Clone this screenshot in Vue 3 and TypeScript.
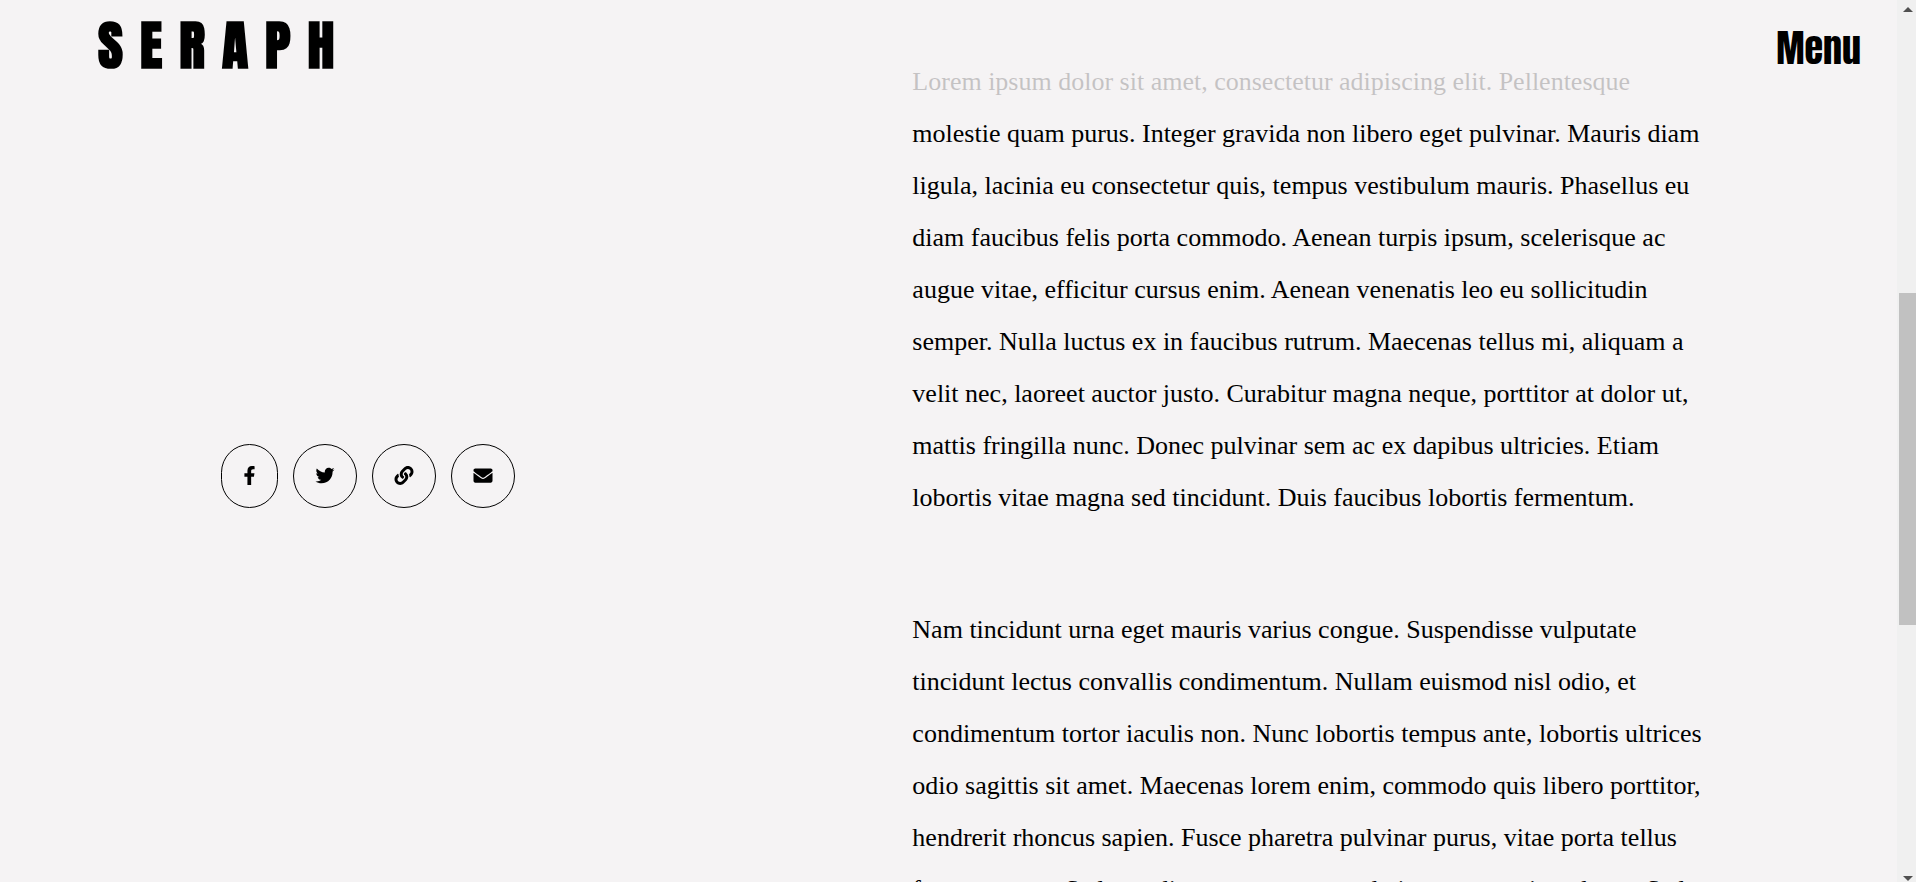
<script setup lang="ts">
interface ShareLink {
  label: string
  viewBox: string
  width: number
  path: string
}

const shareLinks: ShareLink[] = [
  {
    label: 'Share on Facebook',
    viewBox: '0 0 320 512',
    width: 13,
    path: 'M279.14 288l14.22-92.66h-88.91v-60.13c0-25.35 12.42-50.06 52.24-50.06h40.42V6.26S260.43 0 225.36 0c-73.22 0-121.08 44.38-121.08 124.72v70.62H22.89V288h81.39v224h100.17V288z',
  },
  {
    label: 'Share on Twitter',
    viewBox: '0 0 512 512',
    width: 20,
    path: 'M459.37 151.716c.325 4.548.325 9.097.325 13.645 0 138.72-105.583 298.558-298.558 298.558-59.452 0-114.68-17.219-161.137-47.106 8.447.974 16.568 1.299 25.34 1.299 49.055 0 94.213-16.568 130.274-44.832-46.132-.975-84.792-31.188-98.112-72.772 6.498.974 12.995 1.624 19.818 1.624 9.421 0 18.843-1.3 27.614-3.573-48.081-9.747-84.143-51.98-84.143-102.985v-1.299c13.969 7.797 30.214 12.67 47.431 13.319-28.264-18.843-46.781-51.005-46.781-87.391 0-19.492 5.197-37.36 14.294-52.954 51.655 63.675 129.3 105.258 216.365 109.807-1.624-7.797-2.599-15.918-2.599-24.04 0-57.828 46.782-104.934 104.934-104.934 30.213 0 57.502 12.67 76.67 33.137 23.715-4.548 46.456-13.32 66.599-25.34-7.798 24.366-24.366 44.833-46.132 57.827 21.117-2.273 41.584-8.122 60.426-16.243-14.292 20.791-32.161 39.308-52.628 54.253z',
  },
  {
    label: 'Copy link',
    viewBox: '0 0 512 512',
    width: 20,
    path: 'M326.612 185.391c59.747 59.809 58.927 155.698.36 214.59-.11.12-.24.25-.36.37l-67.2 67.2c-59.27 59.27-155.699 59.262-214.96 0-59.27-59.26-59.27-155.7 0-214.96l37.106-37.106c9.84-9.84 26.786-3.3 27.294 10.606.648 17.722 3.826 35.527 9.69 52.721 1.986 5.822.567 12.262-3.783 16.612l-13.087 13.087c-28.026 28.026-28.905 73.66-1.155 101.96 28.024 28.579 74.086 28.749 102.325.51l67.2-67.19c28.191-28.191 28.073-73.757 0-101.83-3.701-3.694-7.429-6.564-10.341-8.569a16.037 16.037 0 0 1-6.947-12.606c-.396-10.567 3.348-21.456 11.698-29.806l21.054-21.055c5.521-5.521 14.182-6.199 20.584-1.731a152.482 152.482 0 0 1 20.522 17.197zM467.547 44.449c-59.261-59.262-155.69-59.27-214.96 0l-67.2 67.2c-.12.12-.25.25-.36.37-58.566 58.892-59.387 154.781.36 214.59a152.454 152.454 0 0 0 20.521 17.196c6.402 4.468 15.064 3.789 20.584-1.731l21.054-21.055c8.35-8.35 12.094-19.239 11.698-29.806a16.037 16.037 0 0 0-6.947-12.606c-2.912-2.005-6.64-4.875-10.341-8.569-28.073-28.073-28.191-73.639 0-101.83l67.2-67.19c28.239-28.239 74.3-28.069 102.325.51 27.75 28.3 26.872 73.934-1.155 101.96l-13.087 13.087c-4.35 4.35-5.769 10.79-3.783 16.612 5.864 17.194 9.042 34.999 9.69 52.721.509 13.906 17.454 20.446 27.294 10.606l37.106-37.106c59.271-59.259 59.271-155.699.001-214.959z',
  },
  {
    label: 'Share by email',
    viewBox: '0 0 512 512',
    width: 20,
    path: 'M502.3 190.8c3.9-3.1 9.7-.2 9.7 4.7V400c0 26.5-21.5 48-48 48H48c-26.5 0-48-21.5-48-48V195.6c0-5 5.7-7.8 9.7-4.7 22.4 17.4 52.1 39.5 154.1 113.6 21.1 15.4 56.7 47.8 92.2 47.6 35.7.3 72-32.8 92.3-47.6 102-74.1 131.6-96.3 154-113.7zM256 320c23.2.4 56.6-29.2 73.4-41.4 132.7-96.3 142.8-104.7 173.4-128.7 5.8-4.5 9.2-11.5 9.2-18.9v-19c0-26.5-21.5-48-48-48H48c-26.5 0-48 21.5-48 48v19c0 7.4 3.4 14.3 9.2 18.9 30.6 23.9 40.7 32.4 173.4 128.7 16.8 12.2 50.2 41.8 73.4 41.4z',
  },
]

const paragraphs: string[] = [
  'Lorem ipsum dolor sit amet, consectetur adipiscing elit. Pellentesque molestie quam purus. Integer gravida non libero eget pulvinar. Mauris diam ligula, lacinia eu consectetur quis, tempus vestibulum mauris. Phasellus eu diam faucibus felis porta commodo. Aenean turpis ipsum, scelerisque ac augue vitae, efficitur cursus enim. Aenean venenatis leo eu sollicitudin semper. Nulla luctus ex in faucibus rutrum. Maecenas tellus mi, aliquam a velit nec, laoreet auctor justo. Curabitur magna neque, porttitor at dolor ut, mattis fringilla nunc. Donec pulvinar sem ac ex dapibus ultricies. Etiam lobortis vitae magna sed tincidunt. Duis faucibus lobortis fermentum.',
  'Nam tincidunt urna eget mauris varius congue. Suspendisse vulputate tincidunt lectus convallis condimentum. Nullam euismod nisl odio, et condimentum tortor iaculis non. Nunc lobortis tempus ante, lobortis ultrices odio sagittis sit amet. Maecenas lorem enim, commodo quis libero porttitor, hendrerit rhoncus sapien. Fusce pharetra pulvinar purus, vitae porta tellus fermentum et. Sed non diam eros ornare, sed viverra a mattis sed erat. Sed',
]
</script>

<template>
  <div class="page">
    <header class="site-header">
      <a class="logo" href="#">SERAPH</a>
      <button class="menu" type="button">Menu</button>
    </header>

    <main class="content">
      <aside class="share">
        <a v-for="link in shareLinks" :key="link.label" class="share-link" href="#" :aria-label="link.label">
          <svg :viewBox="link.viewBox" :width="link.width" height="19" aria-hidden="true">
            <path :d="link.path" />
          </svg>
        </a>
      </aside>
      <article class="story">
        <p v-for="text in paragraphs" :key="text">{{ text }}</p>
      </article>
    </main>

    <div class="scrollbar" aria-hidden="true">
      <svg class="arrow" viewBox="0 0 10 5" width="10" height="5"><path d="M0 5L5 0L10 5z" /></svg>
      <div class="track"><div class="thumb"></div></div>
      <svg class="arrow" viewBox="0 0 10 5" width="10" height="5"><path d="M0 0L5 5L10 0z" /></svg>
    </div>
  </div>
</template>

<style>
body {
  margin: 0;
  background: #f5f3f4;
}
</style>

<style scoped>
.page {
  position: relative;
  height: 100vh;
  overflow: hidden;
  background: #f5f3f4;
  color: #000;
}

.site-header {
  position: absolute;
  top: 0;
  left: 0;
  right: 19px;
  z-index: 1;
  display: flex;
  align-items: center;
  justify-content: space-between;
  box-sizing: border-box;
  height: 100px;
  padding: 0 36px 10px 98px;
  background: rgba(245, 243, 244, 0.8);
  font-family: Anton, "Liberation Sans Narrow", "Liberation Sans", sans-serif;
}

.logo {
  color: #000;
  font-size: 54px;
  font-weight: 700;
  line-height: 82px;
  letter-spacing: 17px;
  text-decoration: none;
}

.menu {
  padding: 6px 0 0;
  border: 0;
  background: none;
  color: #000;
  font: inherit;
  font-size: 38px;
  font-weight: 400;
  line-height: 58px;
  cursor: pointer;
}

.content {
  display: grid;
  grid-template-columns: 33fr 47fr;
  height: 100%;
  margin-right: 19px;
  padding-left: 221px;
}

.share {
  display: flex;
  gap: 15px;
  align-self: start;
  padding-top: 444px;
}

.share-link {
  display: flex;
  align-items: center;
  padding: 21px 21px 22px;
  border: 1px solid #000;
  border-radius: 50px;
  color: #000;
}

.share-link svg {
  display: block;
  fill: currentColor;
}

.story {
  max-width: 800px;
  padding-top: 56px;
  font-family: "Liberation Serif", "Times New Roman", serif;
  font-size: 26px;
  line-height: 52px;
}

.story p {
  margin: 0 0 80px;
}

.scrollbar {
  position: absolute;
  top: 0;
  right: 0;
  bottom: 0;
  display: flex;
  flex-direction: column;
  align-items: center;
  box-sizing: border-box;
  width: 19px;
  padding: 7px 0 1px 2px;
  background: #f0f0f0;
}

.arrow {
  flex: none;
  fill: #505050;
}

.track {
  flex: 1;
  width: 100%;
}

.thumb {
  height: 332px;
  margin-top: 281px;
  background: #c1c1c1;
}
</style>
